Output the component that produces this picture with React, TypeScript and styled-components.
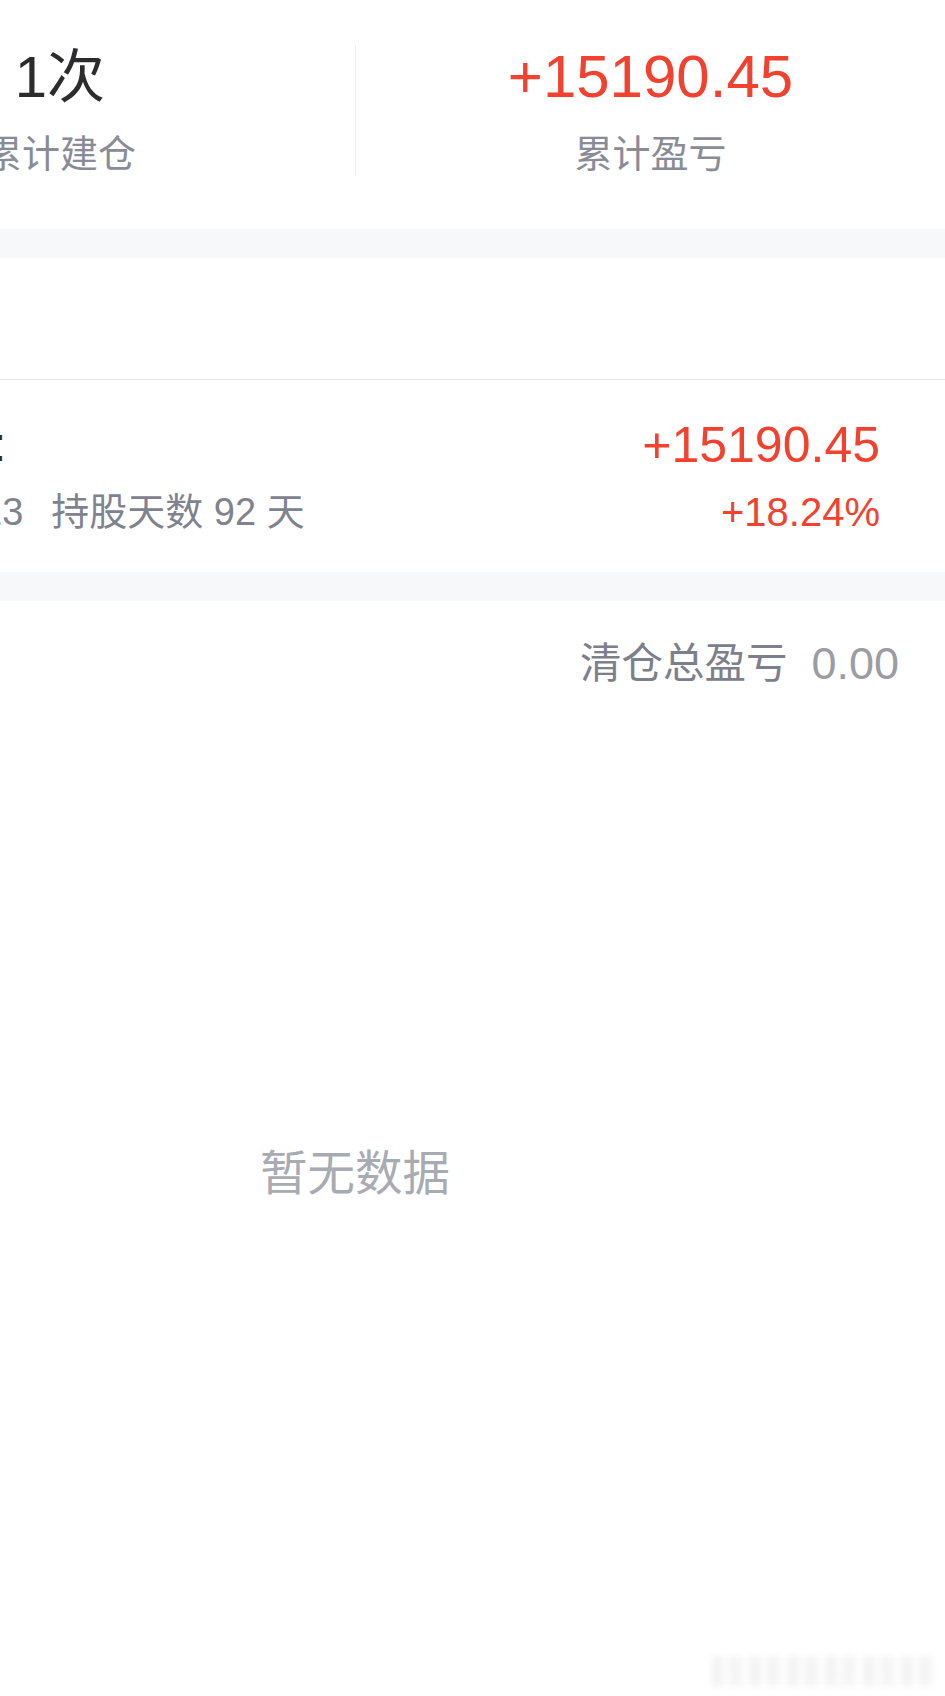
import React from "react";
import styled, { createGlobalStyle } from "styled-components";

const GlobalStyle = createGlobalStyle`
  html, body {
    margin: 0;
    padding: 0;
    background: #ffffff;
    overflow: hidden;
  }
  body {
    font-family: "Liberation Sans", "Noto Sans CJK SC", sans-serif;
  }
`;

const Page = styled.div`
  width: 1180px;
  margin-left: -235px;
  min-height: 1696px;
  background: #ffffff;
  display: flex;
  flex-direction: column;
  font-family: "Liberation Sans", "Noto Sans CJK SC", sans-serif;
`;

const StatsGrid = styled.div`
  display: grid;
  grid-template-columns: 1fr 1fr;
  padding: 45px 0 53px;
`;

const StatCell = styled.div<{ $divider?: boolean }>`
  display: flex;
  flex-direction: column;
  align-items: center;
  height: 131px;
  border-left: ${(p) => (p.$divider ? "1px solid #eeeef0" : "none")};
`;

const StatValue = styled.div<{ $tone: "dark" | "red" }>`
  font-size: ${(p) => (p.$tone === "red" ? "60px" : "58px")};
  line-height: 64px;
  color: ${(p) => (p.$tone === "red" ? "#f2412f" : "#2c2c2e")};
  white-space: nowrap;
`;

const StatLabel = styled.div`
  margin-top: 25px;
  font-size: 38px;
  line-height: 40px;
  color: #898c97;
  white-space: nowrap;
`;

const GapBand = styled.div`
  height: 29px;
  background: #f7f8fa;
`;

const HeaderBlank = styled.div`
  height: 121px;
  border-bottom: 1px solid #e6e6e8;
`;

const PositionRow = styled.div`
  display: flex;
  justify-content: space-between;
  align-items: flex-start;
  padding: 37px 65px 38px 216px;
`;

const RowColumn = styled.div<{ $align: "start" | "end" }>`
  display: flex;
  flex-direction: column;
  align-items: ${(p) => (p.$align === "end" ? "flex-end" : "flex-start")};
  gap: 17px;
`;

const NameLine = styled.div`
  font-size: 48px;
  line-height: 56px;
  color: #2c2c2e;
  margin-left: 12px;
`;

const MetaLine = styled.div`
  font-size: 38px;
  line-height: 44px;
  color: #80838e;
  white-space: nowrap;
  display: flex;
`;

const MetaDate = styled.span`
  margin-right: 28px;
`;

const ProfitValue = styled.div`
  font-size: 50px;
  line-height: 56px;
  color: #f2412f;
`;

const ProfitRate = styled.div`
  font-size: 40px;
  line-height: 44px;
  color: #f2412f;
`;

const ClosedHeader = styled.div`
  display: flex;
  justify-content: flex-end;
  align-items: center;
  gap: 24px;
  padding: 41px 46px 0 0;
  line-height: 44px;
`;

const ClosedLabel = styled.span`
  font-size: 41.5px;
  color: #7d808b;
`;

const ClosedValue = styled.span`
  font-size: 45px;
  color: #9b9da3;
`;

const EmptyState = styled.div`
  margin-top: 458px;
  text-align: center;
  font-size: 47.5px;
  line-height: 60px;
  color: #a9abb2;
`;

const Watermark = styled.div`
  position: fixed;
  left: 712px;
  top: 1656px;
  width: 225px;
  height: 30px;
  filter: blur(3.5px);
  opacity: 0.25;
  background: repeating-linear-gradient(
    90deg,
    #c9c9c9 0px,
    #c9c9c9 10px,
    #ffffff 10px,
    #ffffff 16px,
    #d5d5d5 16px,
    #d5d5d5 30px,
    #ffffff 30px,
    #ffffff 38px
  );
`;

export default function App() {
  return (
    <>
      <GlobalStyle />
      <Page>
        <StatsGrid>
          <StatCell>
            <StatValue $tone="dark">1次</StatValue>
            <StatLabel>累计建仓</StatLabel>
          </StatCell>
          <StatCell $divider>
            <StatValue $tone="red">+15190.45</StatValue>
            <StatLabel>累计盈亏</StatLabel>
          </StatCell>
        </StatsGrid>
        <GapBand />
        <HeaderBlank />
        <PositionRow>
          <RowColumn $align="start">
            <NameLine>:</NameLine>
            <MetaLine>
              <MetaDate>13</MetaDate>
              持股天数 92 天
            </MetaLine>
          </RowColumn>
          <RowColumn $align="end">
            <ProfitValue>+15190.45</ProfitValue>
            <ProfitRate>+18.24%</ProfitRate>
          </RowColumn>
        </PositionRow>
        <GapBand />
        <ClosedHeader>
          <ClosedLabel>清仓总盈亏</ClosedLabel>
          <ClosedValue>0.00</ClosedValue>
        </ClosedHeader>
        <EmptyState>暂无数据</EmptyState>
      </Page>
      <Watermark />
    </>
  );
}
